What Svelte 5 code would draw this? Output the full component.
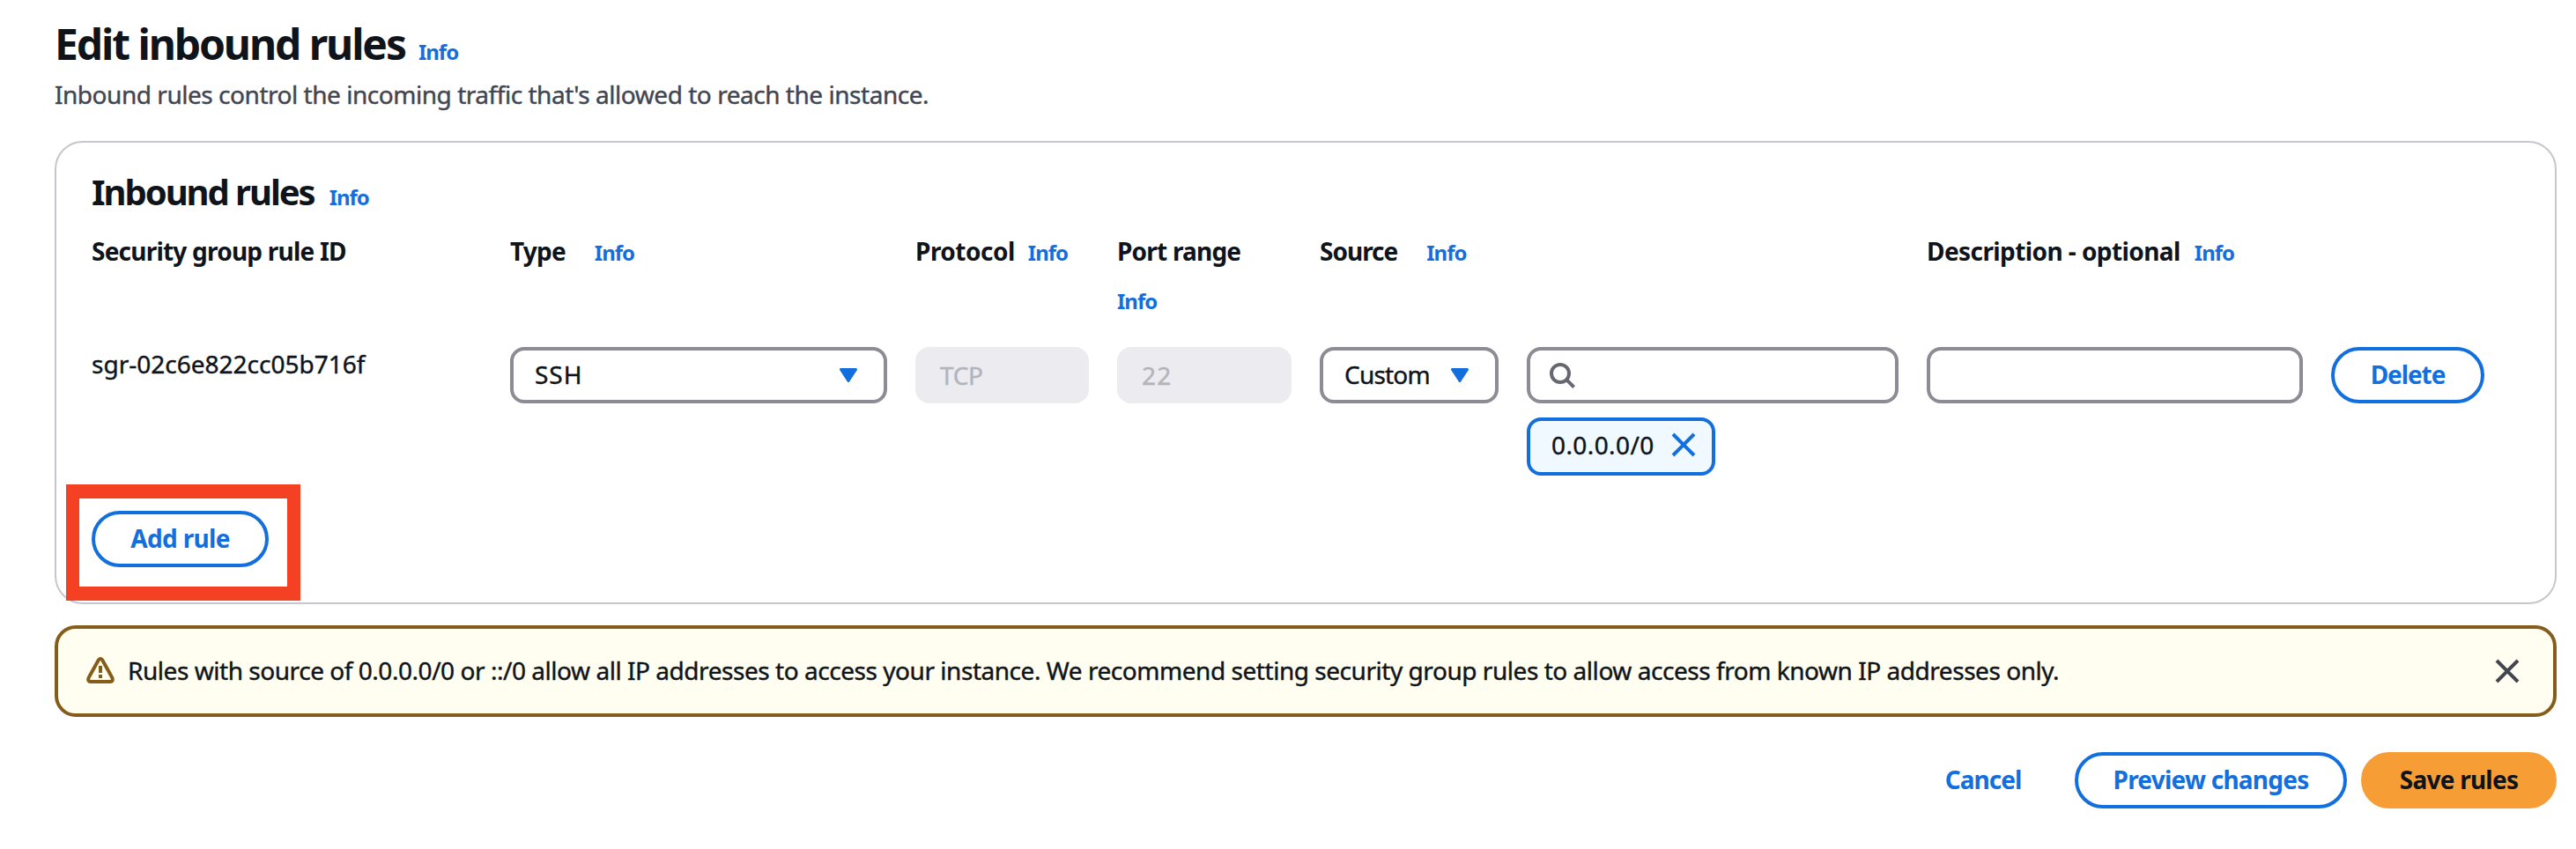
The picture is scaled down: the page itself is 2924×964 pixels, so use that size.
<script>
  const columns = [
    { label: 'Security group rule ID', spacing: -0.78, gap: null },
    { label: 'Type', spacing: -0.8, gap: 33 },
    { label: 'Protocol', spacing: -0.5, gap: 15 },
    { label: 'Port range', spacing: -0.79, gap: 0, wrap: true },
    { label: 'Source', spacing: -1, gap: 33 },
    { label: 'Description - optional', spacing: -0.58, gap: 16 }
  ];
</script>

{#snippet info()}<a class="info" href="#info">Info</a>{/snippet}

{#snippet caret()}
  <svg class="caret" width="20" height="16" viewBox="0 0 20 16">
    <path d="M1.5 1.5h17L10 14.5z" fill="#136fdd" stroke="#136fdd" stroke-width="3" stroke-linejoin="round" />
  </svg>
{/snippet}

{#snippet cross()}
  <svg width="32" height="32" viewBox="0 0 32 32">
    <path d="M4 4l24 24M28 4L4 28" stroke="currentColor" stroke-width="4" fill="none" />
  </svg>
{/snippet}

<main>
  <header>
    <h1><span>Edit inbound rules</span>{@render info()}</h1>
    <p>Inbound rules control the incoming traffic that's allowed to reach the instance.</p>
  </header>

  <section class="card">
    <h2><span>Inbound rules</span>{@render info()}</h2>

    <div class="grid heads">
      {#each columns as col}
        <div class="head" class:wrap={col.wrap}>
          <span style="letter-spacing: {col.spacing}px">{col.label}</span>
          {#if col.gap !== null}<span class="slot" style="margin-left: {col.gap}px">{@render info()}</span>{/if}
        </div>
      {/each}
    </div>

    <div class="grid row">
      <div class="rule-id">sgr-02c6e822cc05b716f</div>
      <div class="field select type"><span>SSH</span>{@render caret()}</div>
      <div class="field disabled tcp">TCP</div>
      <div class="field disabled port">22</div>
      <div class="source">
        <div class="field select custom"><span>Custom</span>{@render caret()}</div>
        <div class="cidr">
          <div class="field search">
            <svg width="32" height="32" viewBox="0 0 32 32" fill="none" stroke="#656871" stroke-width="4">
              <circle cx="14" cy="14" r="10" />
              <path d="M21 21l8.6 8.6" />
            </svg>
          </div>
          <div class="token"><span>0.0.0.0/0</span>{@render cross()}</div>
        </div>
      </div>
      <div class="field"></div>
      <button class="delete">Delete</button>
    </div>

    <div class="add">
      <button>Add rule</button>
      <div class="highlight"></div>
    </div>
  </section>

  <section class="alert">
    <svg class="warn" width="32" height="32" viewBox="0 0 32 32">
      <path d="M13.9 4.2 2.6 24.6Q1.2 29 4.8 29H27.2Q30.8 29 29.4 24.6L18.1 4.2Q16 1.8 13.9 4.2Z" fill="none" stroke="#855d1a" stroke-width="4" stroke-linejoin="round" />
      <path d="M16 11v8M16 21v4" stroke="#855d1a" stroke-width="4" />
    </svg>
    <p>Rules with source of 0.0.0.0/0 or ::/0 allow all IP addresses to access your instance. We recommend setting security group rules to allow access from known IP addresses only.</p>
    <span class="close">{@render cross()}</span>
  </section>

  <footer>
    <button class="link">Cancel</button>
    <button class="preview">Preview changes</button>
    <button class="primary">Save rules</button>
  </footer>
</main>

<style>
  :global(body) { background: #fff; }
  main {
    box-sizing: border-box;
    width: 2924px;
    height: 964px;
    padding: 20px 22px 0 62px;
    font: 400 28px/40px 'Noto Sans', 'Open Sans', sans-serif;
    color: #0f141a;
    overflow: hidden;
  }
  h1, h2, p { margin: 0; }
  header p, .rule-id, .field, .token, .alert p { -webkit-text-stroke: 0.4px currentColor; }
  header { height: 140px; }
  h1, h2 { display: flex; align-items: baseline; white-space: nowrap; }
  h1 { font-size: 48px; line-height: 60px; letter-spacing: -2.1px; }
  h1 .info { margin-left: 15px; }
  header p { margin-top: 7px; letter-spacing: -0.467px; color: #424650; white-space: nowrap; }
  .info { font-size: 24px; line-height: 1; font-weight: 700; letter-spacing: -1px; color: #136fdd; text-decoration: none; }
  .card {
    box-sizing: border-box;
    height: 526px;
    border: 2px solid #c6c6cd;
    border-radius: 32px;
    padding: 32px 40px 0;
  }
  h2 { font-size: 40px; line-height: 48px; letter-spacing: -2.05px; }
  h2 .info { margin-left: 17px; }
  .grid {
    display: grid;
    grid-template-columns: 443px 428px 197px 198px 657px 427px 174px;
    column-gap: 32px;
    align-items: start;
  }
  .heads { height: 129px; margin-top: 23px; }
  .head { display: flex; align-items: baseline; font-weight: 700; white-space: nowrap; }
  .wrap { flex-direction: column; }
  .wrap .slot { margin-top: 15px; }
  .slot { line-height: 40px; }
  .row { height: 186px; }
  .rule-id { margin-top: -1px; }
  .field {
    box-sizing: border-box;
    height: 64px;
    border: 4px solid #8c8c94;
    border-radius: 16px;
    background: #fff;
    line-height: 54px;
    padding: 0 24px;
  }
  .select { display: flex; justify-content: space-between; }
  .type { letter-spacing: 1px; padding-right: 30px; }
  .caret { margin-top: 20px; flex: none; }
  .disabled { background: #ebebf0; border-color: #ebebf0; color: #b4b4bb; line-height: 56px; }
  .tcp { letter-spacing: -0.3px; }
  .port { letter-spacing: 1.2px; }
  .source { display: grid; grid-template-columns: 203px 422px; column-gap: 32px; align-items: start; }
  .custom { letter-spacing: -0.8px; padding-right: 30px; }
  .search { padding: 12px 20px; line-height: 0; }
  .token {
    box-sizing: border-box;
    display: flex;
    width: 214px;
    height: 66px;
    margin-top: 16px;
    padding: 0 16px 0 24px;
    justify-content: space-between;
    border: 4px solid #136fdd;
    border-radius: 16px;
    background: #f0f9ff;
    line-height: 54px;
    letter-spacing: 0.4px;
  }
  .token svg { color: #136fdd; margin-top: 11px; }
  button {
    box-sizing: border-box;
    height: 64px;
    padding: 0 0 2px;
    border: 4px solid #136fdd;
    border-radius: 32px;
    background: #fff;
    color: #136fdd;
    font: 700 28px/40px 'Noto Sans', 'Open Sans', sans-serif;
    letter-spacing: -0.76px;
    white-space: nowrap;
  }
  .delete { width: 174px; letter-spacing: -1.08px; }
  .add { position: relative; width: 201px; }
  .add button { width: 201px; letter-spacing: -0.66px; }
  .highlight {
    position: absolute;
    left: -29px;
    top: -30px;
    box-sizing: border-box;
    width: 266px;
    height: 132px;
    border: solid #f44123;
    border-width: 16px 15px;
  }
  .alert {
    box-sizing: border-box;
    display: flex;
    height: 104px;
    margin-top: 24px;
    padding: 0 36px 0 32px;
    border: 4px solid #855d1a;
    border-radius: 24px;
    background: #fffef0;
  }
  .warn { margin-top: 31px; flex: none; }
  .alert p { flex: 1; margin: 27px 0 0 15px; letter-spacing: -0.458px; white-space: nowrap; }
  .close { color: #424650; line-height: 0; margin-top: 32px; }
  footer { display: flex; justify-content: flex-end; margin-top: 40px; }
  .link { border-color: transparent; width: 172px; letter-spacing: -1px; margin-right: 18px; }
  .preview { width: 309px; margin-right: 16px; }
  .primary { width: 222px; background: #f79d35; border-color: #f79d35; color: #0f141a; }
</style>
